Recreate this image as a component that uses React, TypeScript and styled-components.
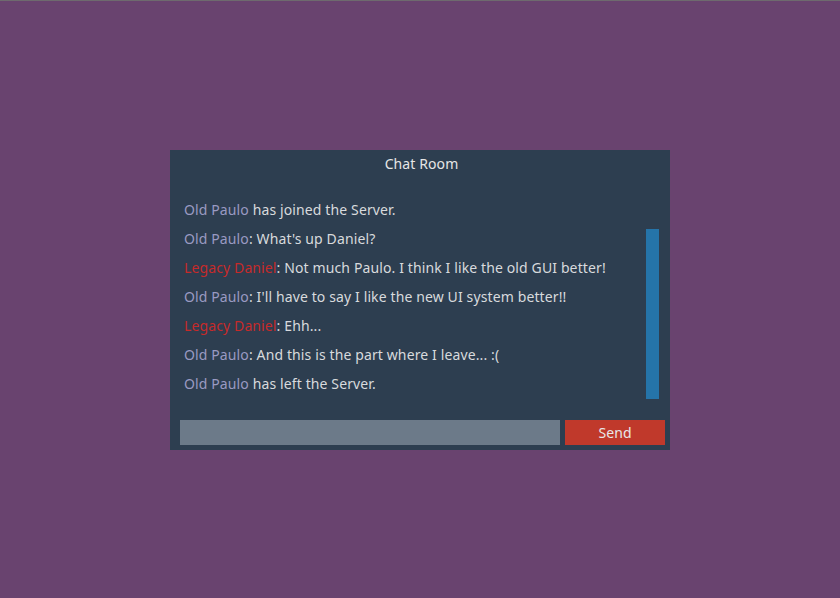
import React from "react";
import styled, { createGlobalStyle } from "styled-components";

const Global = createGlobalStyle`
  html, body { margin: 0; padding: 0; background: #69436f; }
  body { font-family: "Noto Sans", "Open Sans", sans-serif; }
`;

const Page = styled.div`
  min-height: 598px;
  box-sizing: border-box;
  border-top: 1px solid #6e6a6e;
  display: flex;
  justify-content: center;
  padding-top: 149px;
`;

const Panel = styled.div`
  width: 500px;
  height: 300px;
  background: #2d3e50;
  display: flex;
  flex-direction: column;
  box-sizing: border-box;
`;

const Title = styled.div`
  height: 28px;
  line-height: 28px;
  text-align: center;
  color: #e6e6e6;
  font-size: 14px;
  letter-spacing: 0.1px;
  padding-left: 3px;
`;

const Body = styled.div`
  flex: 1;
  display: flex;
  padding: 17px 11px 0 14px;
`;

const List = styled.div`
  flex: 1;
`;

const Line = styled.div`
  height: 29px;
  line-height: 29px;
  font-size: 14px;
  letter-spacing: 0.12px;
  color: #d8dadd;
  white-space: nowrap;
`;

const Name = styled.span<{ $red?: boolean }>`
  color: ${(p) => (p.$red ? "#c62a2a" : "#9a9ac2")};
`;

const Track = styled.div`
  width: 13px;
  padding-top: 34px;
`;

const Thumb = styled.div`
  height: 170px;
  background: #2574a9;
`;

const Footer = styled.div`
  display: flex;
  gap: 5px;
  padding: 0 5px 5px 10px;
`;

const Input = styled.div`
  flex: 1;
  height: 25px;
  background: #6c7a89;
`;

const SendButton = styled.button`
  width: 100px;
  height: 25px;
  border: none;
  padding: 0;
  background: #c0392b;
  color: #e8e8e8;
  font-family: inherit;
  font-size: 14px;
  letter-spacing: 0.1px;
  line-height: 25px;
`;

type Msg = { name: string; red?: boolean; text: string };

const messages: Msg[] = [
  { name: "Old Paulo", text: " has joined the Server." },
  { name: "Old Paulo", text: ": What's up Daniel?" },
  { name: "Legacy Daniel", red: true, text: ": Not much Paulo. I think I like the old GUI better!" },
  { name: "Old Paulo", text: ": I'll have to say I like the new UI system better!!" },
  { name: "Legacy Daniel", red: true, text: ": Ehh..." },
  { name: "Old Paulo", text: ": And this is the part where I leave... :(" },
  { name: "Old Paulo", text: " has left the Server." },
];

export default function App() {
  return (
    <>
      <Global />
      <Page>
        <Panel>
          <Title>Chat Room</Title>
          <Body>
            <List>
              {messages.map((m, i) => (
                <Line key={i}>
                  <Name $red={m.red}>{m.name}</Name>
                  {m.text}
                </Line>
              ))}
            </List>
            <Track>
              <Thumb />
            </Track>
          </Body>
          <Footer>
            <Input />
            <SendButton>Send</SendButton>
          </Footer>
        </Panel>
      </Page>
    </>
  );
}
